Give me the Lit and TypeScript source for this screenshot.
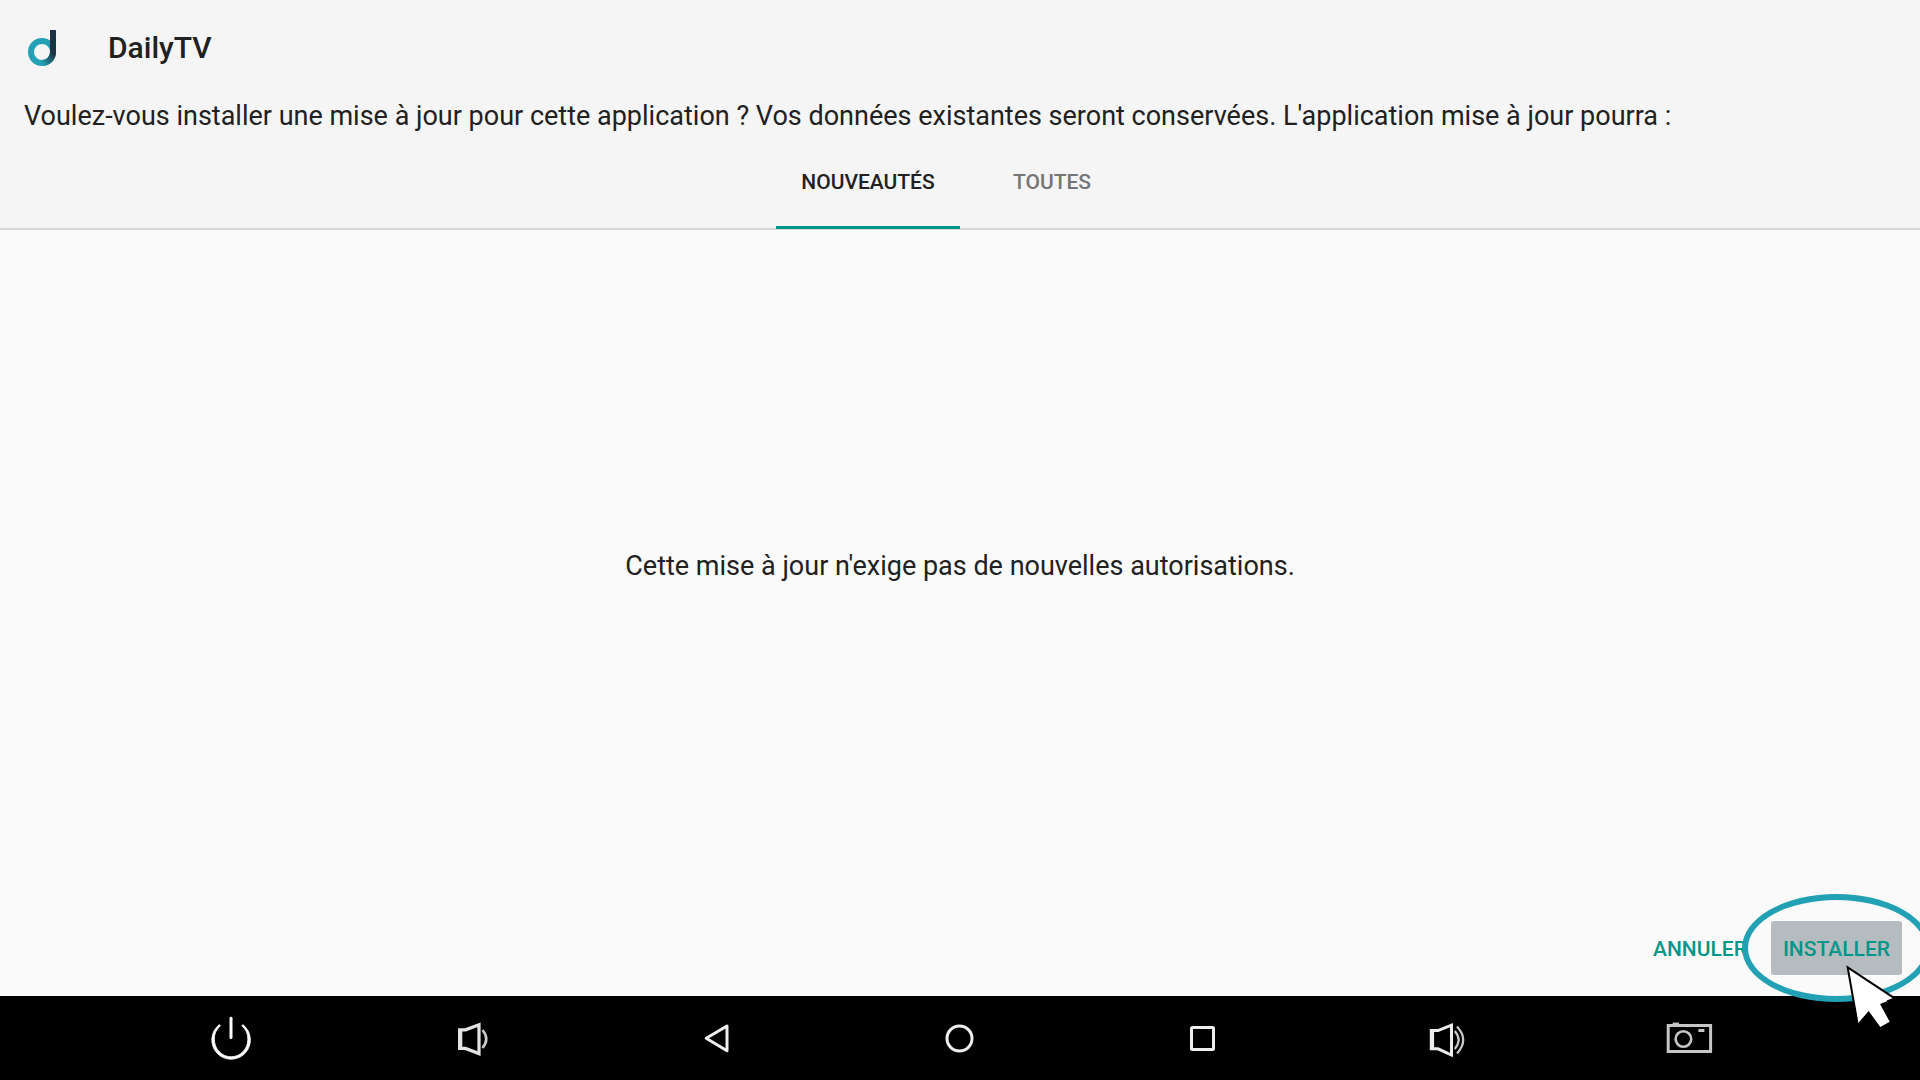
import { LitElement, html, css, svg, type TemplateResult } from "lit";
import { customElement, state } from "lit/decorators.js";

interface NavItem {
  label: string;
  icon: TemplateResult;
}

/* Each icon is drawn on a 48 x 48 grid. */
const navItems: NavItem[] = [
  {
    label: "Alimentation",
    icon: svg`
      <path d="M24 4.2V23.4" stroke="#fff" stroke-width="3" stroke-linecap="round" />
      <path d="M12.4 10.6 A19.3 19.3 0 1 0 35.8 10.6 L34.8 11.8 A17 17 0 0 1 40.8 25.6 A16.7 17.2 0 0 1 7.4 25.6 A17 17 0 0 1 13.4 11.8 Z"
        fill="#fff" stroke="#fff" stroke-width=".8" stroke-linejoin="round" />`,
  },
  {
    label: "Baisser le volume",
    icon: svg`
      <path d="M9.6 15.8H15.5L29 10.8V39.6L15.5 34.4H9.6Z" stroke="#e4e4e4" stroke-width="3.2" />
      <path d="M8.2 15V35.4" stroke="#e4e4e4" transform="translate(2.6 0)" stroke-width="3" />
      <path d="M32.5 16Q40 25 32.5 34" stroke="#c8c8c8" stroke-width="2.6" />`,
  },
  {
    label: "Retour",
    icon: svg`<path d="M13.2 24.3L34 12V36.8Z" stroke="#eee" stroke-width="3" stroke-linejoin="round" />`,
  },
  {
    label: "Accueil",
    icon: svg`<circle cx="23.5" cy="24.5" r="12.5" stroke="#eee" stroke-width="3" />`,
  },
  {
    label: "Applications récentes",
    icon: svg`<rect x="12.5" y="13.5" width="22" height="22" rx="1" stroke="#eee" stroke-width="3" />`,
  },
  {
    label: "Augmenter le volume",
    icon: svg`
      <path d="M9.3 16.6H16L29.5 11.2V41L16 34.8H9.3Z" stroke="#ececec" stroke-width="3" />
      <path d="M10.6 16V35.4" stroke="#ececec" stroke-width="3" />
      <path d="M32.8 17Q40.4 26 32.8 35" stroke="#c8c8c8" stroke-width="2.2" />
      <path d="M35 12.6Q47.4 26 35 39.4" stroke="#c8c8c8" stroke-width="2.2" />`,
  },
  {
    label: "Capture d'écran",
    icon: svg`
      <rect x="3.2" y="11.5" width="42.4" height="26" stroke="#c6c6c6" stroke-width="3" />
      <path d="M7.7 9.8H14" stroke="#c6c6c6" stroke-width="2.4" />
      <circle cx="18.4" cy="25" r="7.8" stroke="#c6c6c6" stroke-width="2.6" />
      <path d="M33.4 16.5H39.4" stroke="#c6c6c6" stroke-width="3" />`,
  },
];

@customElement("app-root")
export class AppRoot extends LitElement {
  @state() private tab: "new" | "all" = "new";

  static styles = css`
    :host {
      display: flex;
      flex-direction: column;
      min-height: 100vh;
      overflow: hidden;
      background: #fafafa;
      color: #212121;
      font-family: Roboto, "Liberation Sans", sans-serif;
      font-size: 27px;
      line-height: 32px;
    }
    * {
      box-sizing: border-box;
    }
    button {
      margin: 0;
      border: 0;
      background: none;
      font: inherit;
      font-size: 21px;
      line-height: 24px;
      font-weight: 500;
      text-transform: uppercase;
      cursor: pointer;
    }
    .header {
      display: flex;
      flex-direction: column;
      background: #f5f5f5;
      border-bottom: 2px solid #d9d9d9;
    }
    .title-row {
      display: flex;
      align-items: center;
      gap: 48px;
      padding: 24px 24px 0;
    }
    .logo {
      width: 36px;
      height: 48px;
    }
    h1 {
      margin: 0;
      font-size: 30px;
      line-height: 36px;
      font-weight: 500;
    }
    .question {
      margin: 0;
      padding: 28px 24px 0;
    }
    .tabs {
      display: grid;
      grid-template-columns: 1fr 1fr;
      align-self: center;
      margin: 14px 0 -1px;
    }
    .tab {
      min-width: 184px;
      padding: 24px 24px 32px;
      border-bottom: 3px solid transparent;
      color: #757575;
    }
    .tab.active {
      color: #212121;
      border-bottom-color: #009688;
    }
    .content {
      flex: 1;
      display: flex;
      align-items: center;
      justify-content: center;
    }
    .content p {
      margin: 0;
    }
    .actions {
      position: relative;
      z-index: 1;
      display: flex;
      justify-content: flex-end;
      gap: 12px;
      padding: 20px 18px 21px;
    }
    .action {
      padding: 16px 12px 14px;
      border-radius: 3px;
      color: #009688;
    }
    .primary {
      background: #b5bcbf;
    }
    .target {
      position: relative;
      display: flex;
    }
    .ring {
      position: absolute;
      inset: -27px -29px;
      border: 6px solid #21a1b3;
      border-radius: 50%;
      pointer-events: none;
    }
    .pointer {
      position: absolute;
      top: 42px;
      left: 74px;
      width: 54px;
      height: 66px;
      pointer-events: none;
    }
    .nav {
      display: flex;
      padding: 0 110px;
      background: #000;
    }
    .nav-item {
      flex: 1;
      display: flex;
      justify-content: center;
      padding: 18px 0;
    }
    .nav-icon {
      width: 48px;
      height: 48px;
    }
  `;

  private renderTab(id: "new" | "all", label: string) {
    const active = this.tab === id;
    return html`<button
      class=${active ? "tab active" : "tab"}
      role="tab"
      aria-selected=${active ? "true" : "false"}
      @click=${() => (this.tab = id)}
    >${label}</button>`;
  }

  render() {
    return html`
      <header class="header">
        <div class="title-row">
          <svg class="logo" viewBox="0 0 36 48" fill="none" aria-hidden="true">
            <defs>
              <linearGradient id="bowl" gradientUnits="userSpaceOnUse" x1="17" y1="38" x2="29" y2="29">
                <stop offset="0" stop-color="#21a1b3" />
                <stop offset="1" stop-color="#1e3244" />
              </linearGradient>
            </defs>
            <circle cx="18" cy="28" r="11" stroke="#21a1b3" stroke-width="6" />
            <path d="M29 6V28A11 11 0 0 1 18 39" stroke="url(#bowl)" stroke-width="6" />
          </svg>
          <h1>DailyTV</h1>
        </div>
        <p class="question">Voulez-vous installer une mise à jour pour cette application ? Vos données existantes seront conservées. L'application mise à jour pourra :</p>
        <div class="tabs" role="tablist">
          ${this.renderTab("new", "Nouveautés")}${this.renderTab("all", "Toutes")}
        </div>
      </header>
      <main class="content">
        <p>Cette mise à jour n'exige pas de nouvelles autorisations.</p>
      </main>
      <div class="actions">
        <button class="action">Annuler</button>
        <div class="target">
          <button class="action primary">Installer</button>
          <span class="ring"></span>
          <svg class="pointer" viewBox="0 0 162 198" aria-hidden="true">
            <path d="M8 12L150 106L105 123L134 176L106 192L71 144L39 181Z" fill="#fff" />
            <path d="M37 178L8 13L149 106L126 115" fill="none" stroke="#000" stroke-width="6" />
          </svg>
        </div>
      </div>
      <nav class="nav">
        ${navItems.map(
          (item) => html`<button class="nav-item" aria-label=${item.label}>
            <svg class="nav-icon" viewBox="0 0 48 48" fill="none" aria-hidden="true">${item.icon}</svg>
          </button>`,
        )}
      </nav>
    `;
  }
}
